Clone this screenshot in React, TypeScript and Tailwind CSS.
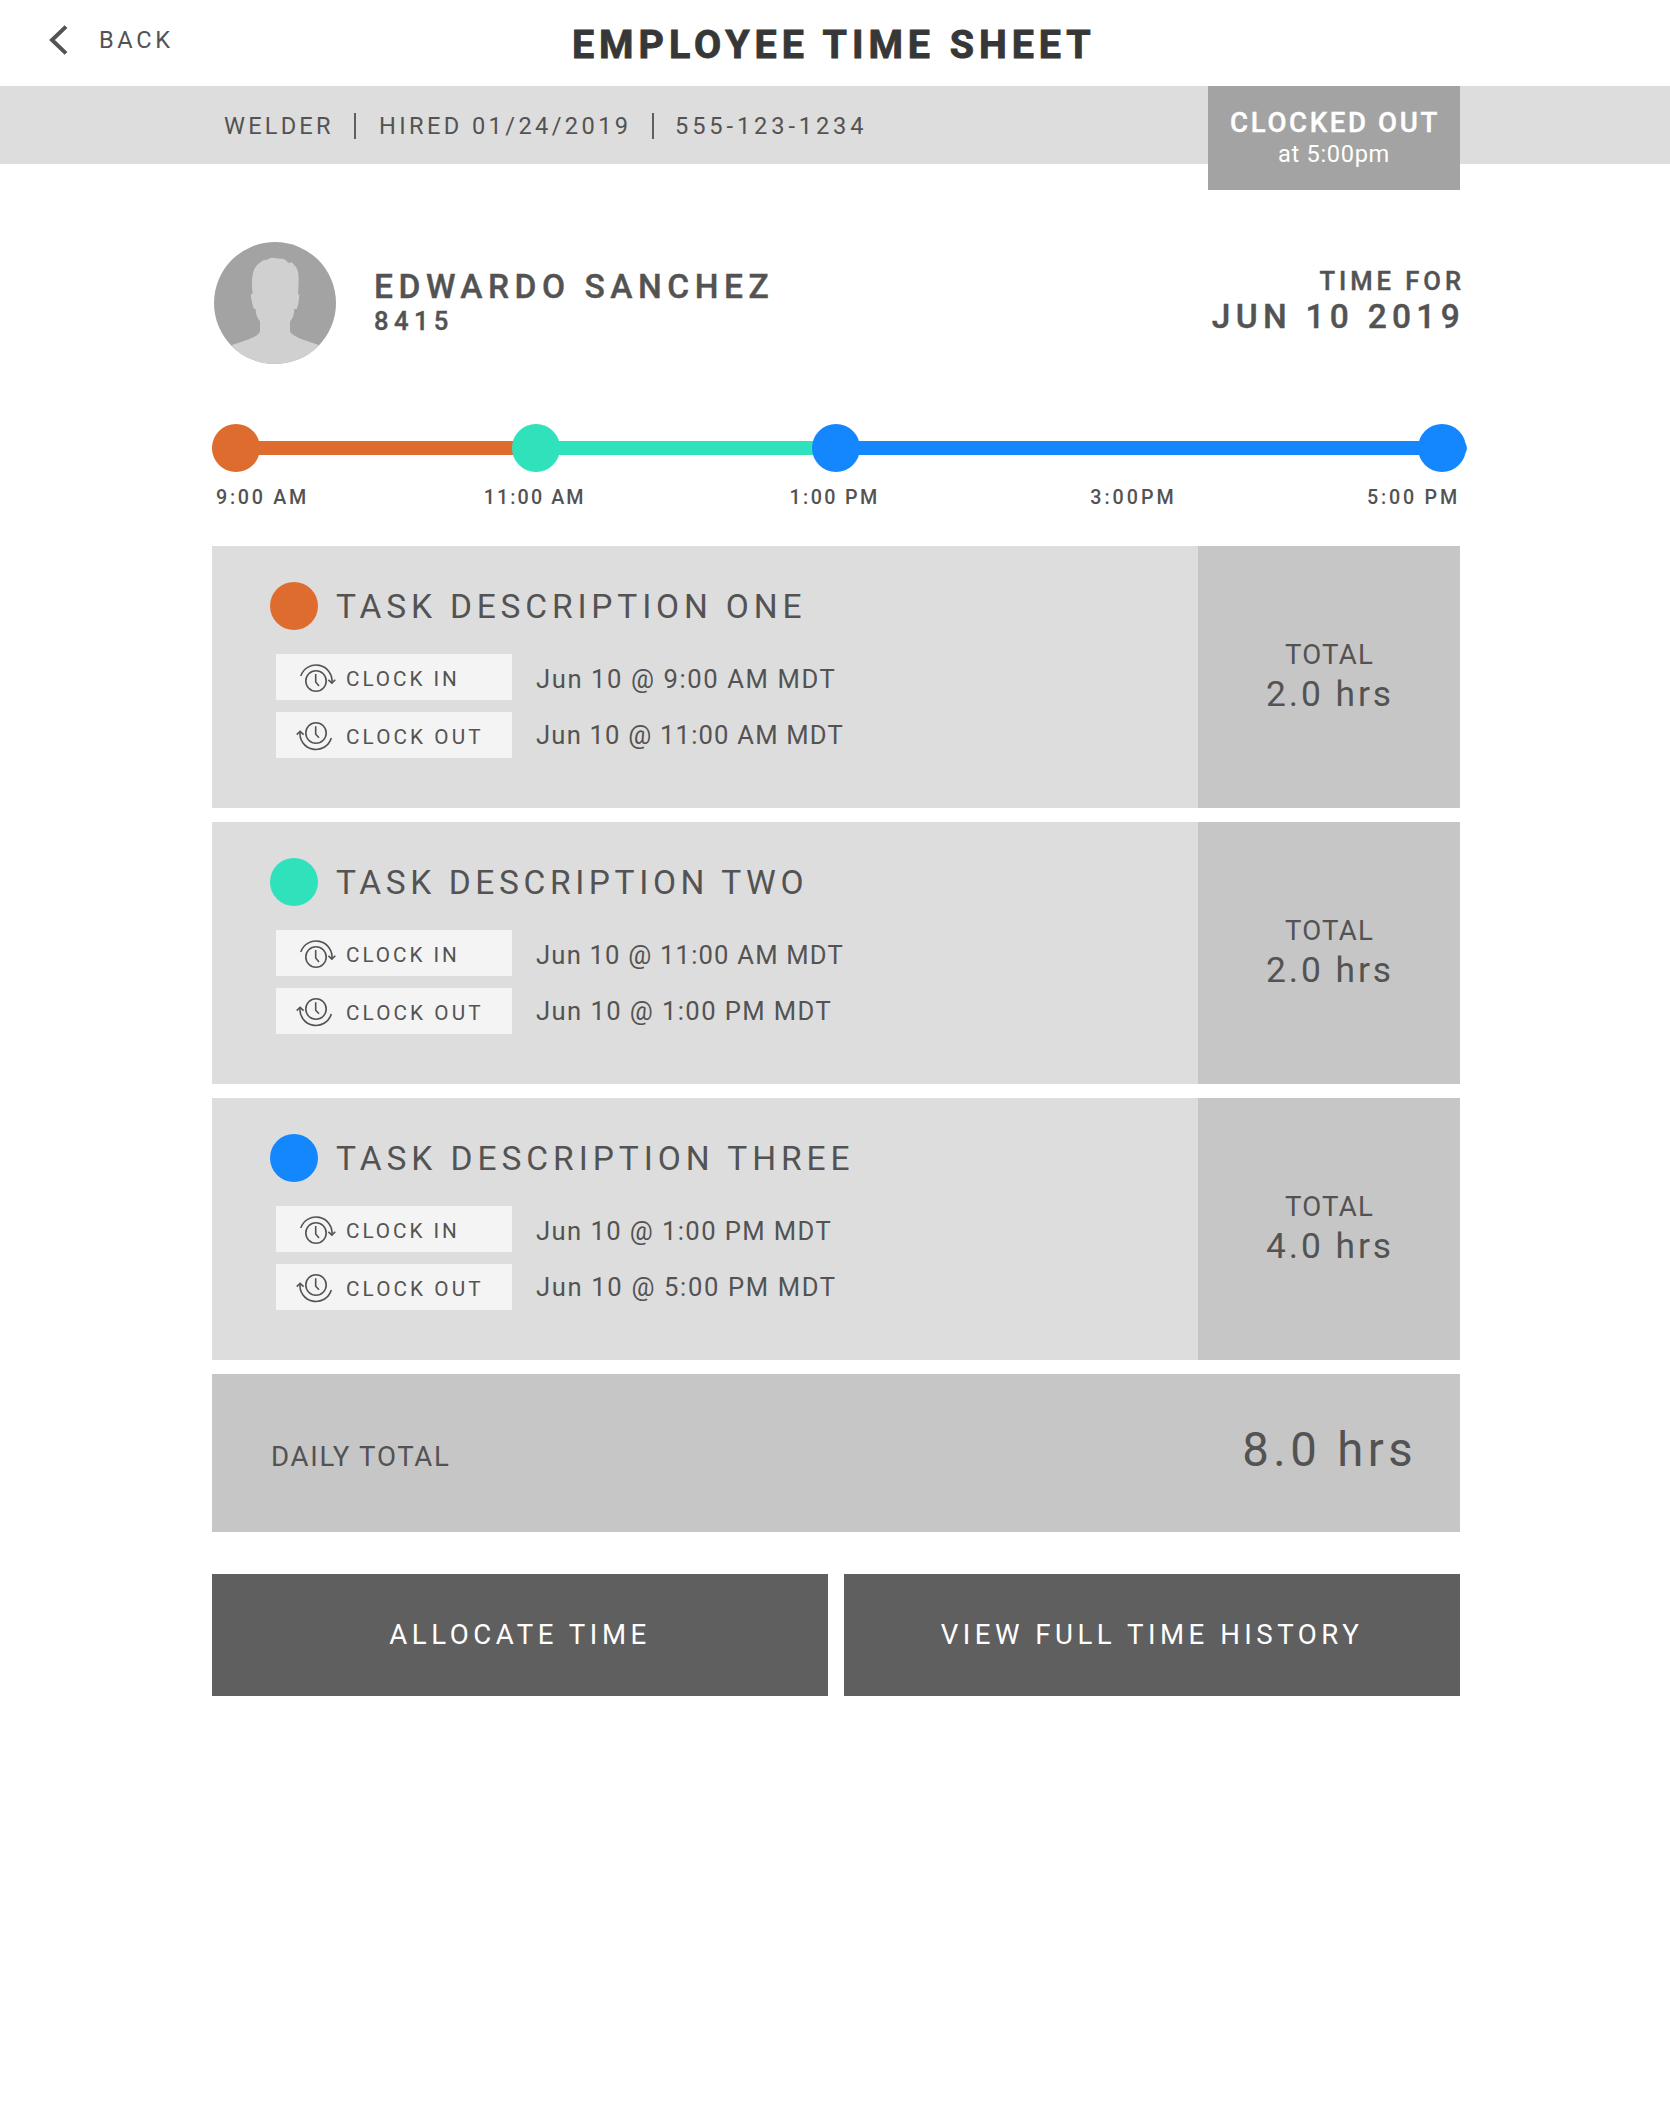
type Task = {
  title: string;
  titleClass: string;
  dot: string;
  clockIn: string;
  clockInClass: string;
  clockOut: string;
  clockOutClass: string;
  total: string;
};

const tasks: Task[] = [
  {
    title: "TASK DESCRIPTION ONE",
    titleClass: "tracking-[4.83px]",
    dot: "bg-[#df6c2f]",
    clockIn: "Jun 10 @ 9:00 AM MDT",
    clockInClass: "tracking-[1.6px]",
    clockOut: "Jun 10 @ 11:00 AM MDT",
    clockOutClass: "tracking-[1.2px]",
    total: "2.0 hrs",
  },
  {
    title: "TASK DESCRIPTION TWO",
    titleClass: "tracking-[4.6px]",
    dot: "bg-[#2fe2bb]",
    clockIn: "Jun 10 @ 11:00 AM MDT",
    clockInClass: "tracking-[1.2px]",
    clockOut: "Jun 10 @ 1:00 PM MDT",
    clockOutClass: "tracking-[1.42px]",
    total: "2.0 hrs",
  },
  {
    title: "TASK DESCRIPTION THREE",
    titleClass: "tracking-[4.95px]",
    dot: "bg-[#1487ff]",
    clockIn: "Jun 10 @ 1:00 PM MDT",
    clockInClass: "tracking-[1.42px]",
    clockOut: "Jun 10 @ 5:00 PM MDT",
    clockOutClass: "tracking-[1.65px]",
    total: "4.0 hrs",
  },
];

function ClockInIcon() {
  return (
    <svg className="ml-[18px] shrink-0" width="44" height="46" viewBox="0 0 44 46" fill="none" stroke="#535353" strokeWidth="1.6">
      <circle cx="22" cy="27" r="10.2" />
      <path d="M21.7 20v8l3.3 4" />
      <path d="M6.8 22A16 16 0 0 1 37.9 28.8" />
      <path d="M34.4 25.8l3.5 3.3 3.4-3.3" />
    </svg>
  );
}

function ClockOutIcon() {
  return (
    <svg className="ml-[18px] shrink-0" width="44" height="46" viewBox="0 0 44 46" fill="none" stroke="#535353" strokeWidth="1.6">
      <circle cx="22" cy="21" r="10.2" />
      <path d="M21.7 14.2v8l3.3 3.6" />
      <path d="M37.3 26A16 16 0 0 1 6.1 19.3" />
      <path d="M2.7 22.6l3.4-3.3 3.5 3.3" />
    </svg>
  );
}

function Avatar() {
  return (
    <svg className="ml-[2px] shrink-0" width="122" height="122" viewBox="12 12 366 366">
      <defs>
        <clipPath id="avatar-clip">
          <circle cx="195" cy="195" r="183" />
        </clipPath>
      </defs>
      <circle cx="195" cy="195" r="183" fill="#a3a3a3" />
      <path
        clipPath="url(#avatar-clip)"
        fill="#d0d0d0"
        d="M64 322L108 307C134 298 149 288 150 280V250C140 236 138 230 137 213H132C126 200 125 186 122 172C122 168 125 168 128 167C124 140 126 112 131 98C136 84 150 72 162 66C168 67 172 66 174 63C184 58 192 58 196 61L214 62C222 62 230 66 235 75L246 73C249 80 258 84 261 92C267 105 267 130 264 167L268 170C267 186 265 202 260 213H253C252 230 250 238 240 250V280C243 290 262 299 284 307L328 322V380H64Z"
      />
    </svg>
  );
}

function TaskCard({ task }: { task: Task }) {
  return (
    <section className="flex h-[262px] bg-[#dddddd]">
      <div className="flex-1 pt-9 pl-[58px]">
        <div className="flex items-center">
          <span className={`size-12 shrink-0 rounded-full ${task.dot}`} />
          <h2 className={`ml-[18px] pt-[2px] text-[33.5px] leading-none ${task.titleClass}`}>{task.title}</h2>
        </div>
        <div className="mt-6 ml-[6px] flex flex-col gap-3">
          <div className="flex">
            <button className="flex h-[46px] w-[236px] items-center bg-[#f4f4f4]">
              <ClockInIcon />
              <span className="ml-2 pt-[5px] text-[20.7px] leading-none tracking-[2.95px]">CLOCK IN</span>
            </button>
            <span className={`flex h-[46px] items-center pt-[6px] pl-6 text-[25.6px] leading-none ${task.clockInClass}`}>
              {task.clockIn}
            </span>
          </div>
          <div className="flex">
            <button className="flex h-[46px] w-[236px] items-center bg-[#f4f4f4]">
              <ClockOutIcon />
              <span className="ml-2 pt-[5px] text-[20.7px] leading-none tracking-[3.1px]">CLOCK OUT</span>
            </button>
            <span className={`flex h-[46px] items-center pt-[2px] pl-6 text-[25.6px] leading-none ${task.clockOutClass}`}>
              {task.clockOut}
            </span>
          </div>
        </div>
      </div>
      <div className="flex w-[262px] flex-col items-center bg-[#c6c6c6] pt-[95px]">
        <span className="pl-px text-[27.6px] leading-[28px] tracking-[1.2px]">TOTAL</span>
        <span className="mt-[7px] pl-[2px] text-[35.4px] leading-[36px] tracking-[2.9px]">{task.total}</span>
      </div>
    </section>
  );
}

export default function App() {
  return (
    <div className="h-[2116px] w-[1670px] bg-white font-[Roboto,sans-serif] text-[#535353]">
      <header className="flex h-[86px] items-start">
        <button className="mt-[25px] flex h-[30px] w-[572px] items-center pl-[48px]">
          <svg width="20" height="30" viewBox="0 0 20 30" fill="none" stroke="#535353" strokeWidth="4">
            <path d="M18 1.6L4 15l14 13.4" />
          </svg>
          <span className="ml-[31px] pt-[2px] text-[23.6px] leading-none tracking-[3.65px]">BACK</span>
        </button>
        <h1 className="mt-[25px] text-[39.4px] leading-[40px] font-bold tracking-[4.96px] whitespace-nowrap text-[#373737] [-webkit-text-stroke:0.9px_#373737]">
          EMPLOYEE TIME SHEET
        </h1>
      </header>

      <div className="flex h-[78px] items-center bg-[#dddddd] pl-[224px] text-[23.6px] leading-none whitespace-nowrap">
        <span className="w-[130px] pt-1 tracking-[3.2px]">WELDER</span>
        <span className="mt-[2px] h-[26px] w-[2px] bg-[#5f5f5f]" />
        <span className="ml-[23px] w-[273px] pt-1 tracking-[3.4px]">HIRED 01/24/2019</span>
        <span className="mt-[2px] h-[26px] w-[2px] bg-[#5f5f5f]" />
        <span className="ml-[21px] pt-1 tracking-[3.9px]">555-123-1234</span>
        <div className="mr-[210px] ml-auto flex h-[104px] w-[252px] shrink-0 flex-col items-center self-start bg-[#a3a3a3] pt-[23px] text-white">
          <span className="pl-[2px] text-[27.6px] leading-[28px] font-medium tracking-[2.63px] [-webkit-text-stroke:0.4px_#ffffff]">
            CLOCKED OUT
          </span>
          <span className="mt-[5px] leading-6 tracking-[0.67px]">at 5:00pm</span>
        </div>
      </div>

      <main className="ml-[212px] w-[1248px]">
        <div className="mt-[78px] flex items-start font-medium [-webkit-text-stroke:0.4px_#535353]">
          <Avatar />
          <div className="mt-7 ml-[38px]">
            <div className="text-[33.5px] leading-[34px] tracking-[5.54px]">EDWARDO SANCHEZ</div>
            <div className="mt-1 text-[25.6px] leading-[26px] tracking-[5.4px]">8415</div>
          </div>
          <div className="mt-[26px] -mr-[5px] ml-auto text-right">
            <div className="text-[25.6px] leading-[26px] tracking-[3.95px]">TIME FOR</div>
            <div className="mt-[6px] text-[33.5px] leading-[34px] tracking-[5.27px]">JUN 10 2019</div>
          </div>
        </div>

        <div className="relative mt-[60px] flex h-12 w-[1255px] items-center">
          <span className="h-[14px] w-[324px] rounded-l-full bg-[#df6c2f]" />
          <span className="h-[14px] w-[300px] bg-[#2fe2bb]" />
          <span className="h-[14px] flex-1 rounded-r-full bg-[#1487ff]" />
          <span className="absolute left-0 size-12 rounded-full bg-[#df6c2f]" />
          <span className="absolute left-[300px] size-12 rounded-full bg-[#2fe2bb]" />
          <span className="absolute left-[600px] size-12 rounded-full bg-[#1487ff]" />
          <span className="absolute left-[1206px] size-12 rounded-full bg-[#1487ff]" />
        </div>
        <div className="mt-4 flex pl-1 text-[19.7px] leading-5 font-medium whitespace-nowrap">
          <span className="w-[268px] tracking-[2.7px]">9:00 AM</span>
          <span className="w-[306px] tracking-[2.1px]">11:00 AM</span>
          <span className="w-[301px] tracking-[2.4px]">1:00 PM</span>
          <span className="w-[277px] tracking-[3px]">3:00PM</span>
          <span className="tracking-[2.8px]">5:00 PM</span>
        </div>

        <div className="mt-[38px] flex flex-col gap-[14px]">
          {tasks.map((task) => (
            <TaskCard key={task.title} task={task} />
          ))}
          <div className="flex h-[158px] items-baseline justify-between bg-[#c6c6c6] pt-[52px] pr-[43px] pl-[59px]">
            <span className="text-[27.6px] leading-none tracking-[1.71px]">DAILY TOTAL</span>
            <span className="text-[47.3px] leading-[48px] tracking-[4.4px]">8.0 hrs</span>
          </div>
        </div>

        <div className="mt-[42px] grid grid-cols-2 gap-4 text-[27.6px] leading-none text-white">
          <button className="h-[122px] bg-[#5f5f5f] pb-px tracking-[4.57px]">ALLOCATE TIME</button>
          <button className="h-[122px] bg-[#5f5f5f] pb-px tracking-[4.5px]">VIEW FULL TIME HISTORY</button>
        </div>
      </main>
    </div>
  );
}
